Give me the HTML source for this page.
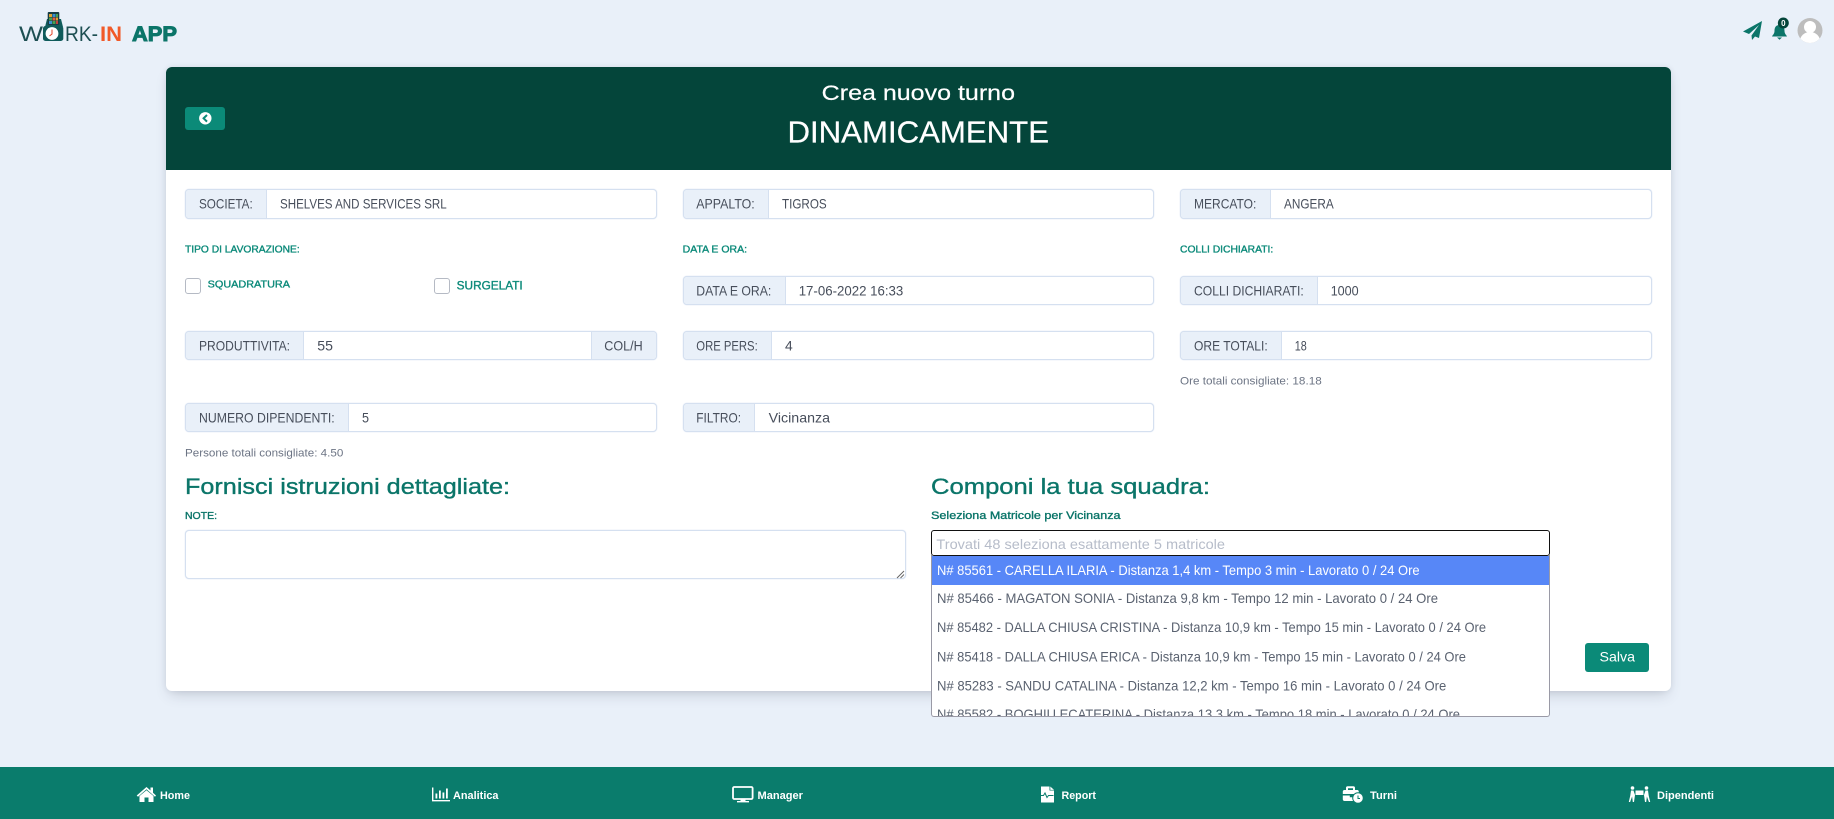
<!DOCTYPE html>
<html lang="it">
<head>
<meta charset="utf-8">
<title>Crea nuovo turno</title>
<style>
html,body{margin:0;padding:0;width:1834px;height:819px;overflow:hidden;background:#e9f0f9;font-family:"Liberation Sans",sans-serif}
.a{position:absolute;box-sizing:border-box}
#card{left:166px;top:67px;width:1505px;height:624px;background:#fff;border-radius:6px;box-shadow:0 7px 14px -4px rgba(65,69,88,.22),0 0 6px rgba(65,69,88,.10)}
#head{left:166px;top:67px;width:1505px;height:103px;background:#04453a;border-radius:6px 6px 0 0}
#back{left:185px;top:107px;width:40px;height:23px;background:#0b8a78;border-radius:3px}
.ig{background:#fff;border:1px solid #d5e0f0;border-radius:4px;overflow:hidden;box-shadow:0 0 1px rgba(160,185,225,.6)}
.ig i{position:absolute;top:0;bottom:0;background:#e9f0f9;display:block;box-sizing:border-box}
.ig i.l{left:0;border-right:1px solid #d5e0f0}
.ig i.r{right:0;border-left:1px solid #d5e0f0}
.cb{width:16px;height:16px;border:1px solid #b5bac4;border-radius:3px;background:#fff}
#ta{left:185px;top:530px;width:721px;height:49px;background:#fff;border:1px solid #d5e0f0;border-radius:4px;box-shadow:0 0 1px rgba(160,185,225,.6)}
#sel{left:931px;top:530px;width:619px;height:26px;background:#fff;border:1.5px solid #111;border-radius:3px}
#list{left:931px;top:555px;width:619px;height:162px;background:#fff;border:1px solid #9a9aa6;border-top:0;border-radius:0 0 3px 3px}
#hi{left:932px;top:556px;width:617px;height:29px;background:#5787f7}
#salva{left:1585px;top:643px;width:64px;height:29px;background:#0b8a78;border-radius:3px}
#foot{left:0;top:767px;width:1834px;height:52px;background:#0a7c6c}
svg#o{position:absolute;left:0;top:0}
text{font-family:"Liberation Sans",sans-serif}
.v{font-size:13.6px;fill:#474e5b}
.t{font-size:10.4px;fill:#0c8a7a;stroke:#0c8a7a;stroke-width:.35px}
.s{font-size:11.2px;fill:#6c7484}
.li{font-size:13.6px;fill:#5a6270}
.f{font-size:11px;font-weight:700;fill:#fff}
.h{font-size:22px;fill:#0b7569;stroke:#0b7569;stroke-width:.35px}
.ic{fill:#fff}
</style>
</head>
<body>
<div class="a" id="card"></div>
<div class="a" id="head"></div>
<div class="a" id="back"></div>

<div class="a ig" style="left:185px;top:189px;width:472px;height:30px"><i class="l" style="width:81px"></i></div>
<div class="a ig" style="left:683px;top:189px;width:471px;height:30px"><i class="l" style="width:85px"></i></div>
<div class="a ig" style="left:1180px;top:189px;width:472px;height:30px"><i class="l" style="width:90px"></i></div>

<div class="a cb" style="left:185px;top:278px"></div>
<div class="a cb" style="left:434px;top:278px"></div>

<div class="a ig" style="left:683px;top:276px;width:471px;height:29px"><i class="l" style="width:102px"></i></div>
<div class="a ig" style="left:1180px;top:276px;width:472px;height:29px"><i class="l" style="width:137px"></i></div>

<div class="a ig" style="left:185px;top:331px;width:472px;height:29px"><i class="l" style="width:118px"></i><i class="r" style="width:65px"></i></div>
<div class="a ig" style="left:683px;top:331px;width:471px;height:29px"><i class="l" style="width:88px"></i></div>
<div class="a ig" style="left:1180px;top:331px;width:472px;height:29px"><i class="l" style="width:101px"></i></div>

<div class="a ig" style="left:185px;top:403px;width:472px;height:29px"><i class="l" style="width:163px"></i></div>
<div class="a ig" style="left:683px;top:403px;width:471px;height:29px"><i class="l" style="width:71px"></i></div>

<div class="a" id="ta"></div>
<div class="a" id="list"></div>
<div class="a" id="hi"></div>
<div class="a" id="sel"></div>
<div class="a" id="salva"></div>
<div class="a" id="foot"></div>

<svg id="o" width="1834" height="819" viewBox="0 0 1834 819" xmlns="http://www.w3.org/2000/svg">
<!-- logo -->
<text x="19" y="41" font-size="21" fill="#1d4f52" textLength="24" lengthAdjust="spacingAndGlyphs">W</text>
<path d="M45 27 L47 19 H61 L63 27Z" fill="#0f5b5b"/>
<rect x="47.7" y="12" width="11.6" height="13" rx="1" fill="#173c44"/>
<rect x="49" y="14" width="3" height="3" fill="#e0a030"/><rect x="52.5" y="14" width="3" height="3" fill="#3a8fd0"/><rect x="56" y="14" width="2" height="3" fill="#45a050"/>
<rect x="49" y="17.5" width="3" height="3" fill="#45a050"/><rect x="52.5" y="17.5" width="3" height="3" fill="#e06040"/><rect x="56" y="17.5" width="2" height="3" fill="#e0a030"/>
<rect x="49" y="21" width="3" height="3" fill="#3a8fd0"/><rect x="52.5" y="21" width="3" height="3" fill="#45a050"/><rect x="56" y="21" width="2" height="3" fill="#c04040"/>
<rect x="43" y="26" width="20.3" height="15" rx="2.5" fill="#0f5b5b"/>
<circle cx="52" cy="33.5" r="6.4" fill="#fff"/>
<path d="M52 29.5V34L49.5 36" fill="none" stroke="#e2462a" stroke-width="1"/>
<text x="65" y="41" font-size="21" fill="#1d4f52" textLength="33" lengthAdjust="spacingAndGlyphs">RK-</text>
<text x="100" y="41" font-size="21" font-weight="700" fill="#f15a29" textLength="22" lengthAdjust="spacingAndGlyphs">IN</text>
<text x="132" y="41" font-size="21" font-weight="700" fill="#0b7569" stroke="#0b7569" stroke-width="1" textLength="45" lengthAdjust="spacingAndGlyphs">APP</text>

<!-- top right -->
<path d="M1762 21 L1743 31.5 L1749 34 L1759 25 L1751.5 35.5 L1752 40 L1755 36.5 L1759 38Z" fill="#0b7569"/>
<path d="M1779.5 25c-4 0-5 3-5 6 0 3-2 4-2.5 5.5h15c-.5-1.5-2.5-2.5-2.5-5.5 0-3-1-6-5-6z" fill="#0b7569"/>
<path d="M1777 37.5h5l-2.5 2.2z" fill="#0b7569"/>
<circle cx="1783.3" cy="23" r="5.5" fill="#04453a"/>
<text x="1783.3" y="26" font-size="8" font-weight="700" fill="#fff" text-anchor="middle">0</text>
<clipPath id="av"><circle cx="1810" cy="30.5" r="12.5"/></clipPath>
<circle cx="1810" cy="30.5" r="12.5" fill="#bdbdbd"/>
<g clip-path="url(#av)" fill="#fff"><circle cx="1810" cy="27" r="6"/><ellipse cx="1810" cy="41" rx="10" ry="9"/></g>

<!-- header -->
<circle cx="205.3" cy="118.3" r="6.2" fill="#fff"/>
<path d="M207 115 L203.6 118.3 L207 121.6" fill="none" stroke="#0b8a78" stroke-width="2"/>
<text x="821.7" y="100" font-size="21.6" fill="#fff" stroke="#fff" stroke-width=".2" textLength="193.3" lengthAdjust="spacingAndGlyphs">Crea nuovo turno</text>
<text x="787.5" y="142.7" font-size="30.4" fill="#fff" stroke="#fff" stroke-width=".25" textLength="261.5" lengthAdjust="spacingAndGlyphs">DINAMICAMENTE</text>

<!-- row 1 -->
<text class="v" x="199" y="208.3" textLength="53.7" lengthAdjust="spacingAndGlyphs">SOCIETA:</text>
<text class="v" x="280" y="208.3" textLength="166.7" lengthAdjust="spacingAndGlyphs">SHELVES AND SERVICES SRL</text>
<text class="v" x="696.3" y="208.3" textLength="58.4" lengthAdjust="spacingAndGlyphs">APPALTO:</text>
<text class="v" x="782" y="208.3" textLength="44.7" lengthAdjust="spacingAndGlyphs">TIGROS</text>
<text class="v" x="1194" y="208.3" textLength="62.3" lengthAdjust="spacingAndGlyphs">MERCATO:</text>
<text class="v" x="1284" y="208.3" textLength="49.7" lengthAdjust="spacingAndGlyphs">ANGERA</text>

<!-- section labels -->
<text class="t" x="185" y="252.6" textLength="114.7" lengthAdjust="spacingAndGlyphs">TIPO DI LAVORAZIONE:</text>
<text class="t" x="682.7" y="252.6" textLength="64.3" lengthAdjust="spacingAndGlyphs">DATA E ORA:</text>
<text class="t" x="1180" y="252.6" textLength="93.3" lengthAdjust="spacingAndGlyphs">COLLI DICHIARATI:</text>

<text class="t" x="207.7" y="287.5" textLength="82.3" lengthAdjust="spacingAndGlyphs">SQUADRATURA</text>
<text class="t" x="456.7" y="289.5" style="font-size:11.5px" textLength="66" lengthAdjust="spacingAndGlyphs">SURGELATI</text>

<!-- row 2 -->
<text class="v" x="696.3" y="295.3" textLength="75" lengthAdjust="spacingAndGlyphs">DATA E ORA:</text>
<text class="v" x="798.7" y="295.3" textLength="104.6" lengthAdjust="spacingAndGlyphs">17-06-2022 16:33</text>
<text class="v" x="1194" y="295.3" textLength="109.7" lengthAdjust="spacingAndGlyphs">COLLI DICHIARATI:</text>
<text class="v" x="1330.7" y="295.3" textLength="28" lengthAdjust="spacingAndGlyphs">1000</text>

<!-- row 3 -->
<text class="v" x="199" y="350.3" textLength="91" lengthAdjust="spacingAndGlyphs">PRODUTTIVITA:</text>
<text class="v" x="317.3" y="350.3" textLength="15.7" lengthAdjust="spacingAndGlyphs">55</text>
<text class="v" x="604.3" y="350.3" textLength="38.4" lengthAdjust="spacingAndGlyphs">COL/H</text>
<text class="v" x="696.3" y="350.3" textLength="61.4" lengthAdjust="spacingAndGlyphs">ORE PERS:</text>
<text class="v" x="785" y="350.3" textLength="7.7" lengthAdjust="spacingAndGlyphs">4</text>
<text class="v" x="1194" y="350.3" textLength="73.7" lengthAdjust="spacingAndGlyphs">ORE TOTALI:</text>
<text class="v" x="1294.7" y="350.3" textLength="12" lengthAdjust="spacingAndGlyphs">18</text>
<text class="s" x="1180" y="384.6" textLength="141.7" lengthAdjust="spacingAndGlyphs">Ore totali consigliate: 18.18</text>

<!-- row 4 -->
<text class="v" x="199" y="422.3" textLength="135.7" lengthAdjust="spacingAndGlyphs">NUMERO DIPENDENTI:</text>
<text class="v" x="362" y="422.3" textLength="7" lengthAdjust="spacingAndGlyphs">5</text>
<text class="v" x="696.3" y="422.3" textLength="44.7" lengthAdjust="spacingAndGlyphs">FILTRO:</text>
<text class="v" x="768.7" y="422.3" textLength="61.3" lengthAdjust="spacingAndGlyphs">Vicinanza</text>
<text class="s" x="185" y="456.6" textLength="158.3" lengthAdjust="spacingAndGlyphs">Persone totali consigliate: 4.50</text>

<!-- lower -->
<text class="h" x="185" y="494" textLength="325" lengthAdjust="spacingAndGlyphs">Fornisci istruzioni dettagliate:</text>
<text class="h" x="931" y="494" textLength="279" lengthAdjust="spacingAndGlyphs">Componi la tua squadra:</text>
<text class="t" style="fill:#0b7569;stroke:#0b7569" x="185" y="519" textLength="32" lengthAdjust="spacingAndGlyphs">NOTE:</text>
<text class="t" style="fill:#0b7569;stroke:#0b7569;font-size:11px" x="931" y="519" textLength="189.5" lengthAdjust="spacingAndGlyphs">Seleziona Matricole per Vicinanza</text>
<path d="M904 571 L897 578 M904 574.5 L900.5 578" stroke="#666" stroke-width="1" fill="none"/>

<text x="936.4" y="549.2" font-size="13.6" fill="#b6bcc9" textLength="288.6" lengthAdjust="spacingAndGlyphs">Trovati 48 seleziona esattamente 5 matricole</text>
<text class="li" style="fill:#fff" x="937" y="574.9" textLength="482.6" lengthAdjust="spacingAndGlyphs">N# 85561 - CARELLA ILARIA - Distanza 1,4 km - Tempo 3 min - Lavorato 0 / 24 Ore</text>
<text class="li" x="937" y="603" textLength="501" lengthAdjust="spacingAndGlyphs">N# 85466 - MAGATON SONIA - Distanza 9,8 km - Tempo 12 min - Lavorato 0 / 24 Ore</text>
<text class="li" x="937" y="632" textLength="549" lengthAdjust="spacingAndGlyphs">N# 85482 - DALLA CHIUSA CRISTINA - Distanza 10,9 km - Tempo 15 min - Lavorato 0 / 24 Ore</text>
<text class="li" x="937" y="661.5" textLength="529" lengthAdjust="spacingAndGlyphs">N# 85418 - DALLA CHIUSA ERICA - Distanza 10,9 km - Tempo 15 min - Lavorato 0 / 24 Ore</text>
<text class="li" x="937" y="690.4" textLength="509.3" lengthAdjust="spacingAndGlyphs">N# 85283 - SANDU CATALINA - Distanza 12,2 km - Tempo 16 min - Lavorato 0 / 24 Ore</text>
<svg x="932" y="700" width="617" height="16"><text class="li" x="5" y="19" textLength="523" lengthAdjust="spacingAndGlyphs">N# 85582 - BOGHIU ECATERINA - Distanza 13,3 km - Tempo 18 min - Lavorato 0 / 24 Ore</text></svg>

<text x="1599.5" y="661.7" font-size="13.6" fill="#fff" textLength="35.5" lengthAdjust="spacingAndGlyphs">Salva</text>

<!-- footer -->
<g class="ic">
<path d="M136.7 795.5 L146.5 787 L150.5 790.5 V787.5 H153 V792.7 L156 795.5 L155 796.7 L146.5 789.3 L138 796.7Z"/>
<path d="M139.5 796 L146.5 790.3 L153.5 796 V802 H148.5 V797.5 H144.5 V802 H139.5Z"/>
</g>
<text class="f" x="160" y="799" textLength="30" lengthAdjust="spacingAndGlyphs">Home</text>
<g class="ic">
<path d="M432 787.5h1.4V800h16.6v1.4H432z"/>
<rect x="435.5" y="793.5" width="1.8" height="5"/><rect x="439" y="790.5" width="1.8" height="8"/><rect x="442.5" y="792.5" width="1.8" height="6"/><rect x="446" y="788.5" width="1.8" height="10"/>
</g>
<text class="f" x="453" y="799" textLength="45.5" lengthAdjust="spacingAndGlyphs">Analitica</text>
<rect x="733" y="787" width="19.6" height="12" rx="1.2" fill="none" stroke="#fff" stroke-width="1.8"/>
<rect x="740.5" y="799" width="5" height="2" class="ic"/><rect x="737" y="801" width="12" height="1.4" class="ic"/>
<text class="f" x="757.5" y="799" textLength="45.5" lengthAdjust="spacingAndGlyphs">Manager</text>
<path class="ic" d="M1041 786.5h8.5v4h4.5V802.5h-13z"/>
<path class="ic" d="M1050.3 786.5l3.7 3.4h-3.7z"/>
<path d="M1040 795.5h3.5l1.5-2.5 2 4.5 1.5-2h5" fill="none" stroke="#0a7c6c" stroke-width="1"/>
<text class="f" x="1061.5" y="799" textLength="34.5" lengthAdjust="spacingAndGlyphs">Report</text>
<path class="ic" d="M1346 790v-2.2c0-1 .8-1.6 1.6-1.6h5.8c.8 0 1.6.6 1.6 1.6v2.2h2.2c1 0 1.6.7 1.6 1.6v2.4h-16v-2.4c0-.9.6-1.6 1.6-1.6zM1348 790h5v-1.8h-5z"/>
<path class="ic" d="M1342.800 795.500h7v1.800h3.200v-1.200l1.500-.6v5.500h-10c-.9 0-1.700-.7-1.700-1.600z"/>
<circle class="ic" cx="1358" cy="798" r="5.300" stroke="#0a7c6c" stroke-width="1"/>
<path d="M1358 795.500V798.500h2" fill="none" stroke="#0a7c6c" stroke-width="1"/>
<text class="f" x="1370" y="799" textLength="27" lengthAdjust="spacingAndGlyphs">Turni</text>
<g class="ic">
<circle cx="1632.500" cy="788" r="1.800"/><circle cx="1646.500" cy="788" r="1.800"/>
<rect x="1635.500" y="790.500" width="8" height="4.500"/>
<path d="M1631 790.500h2.500l1.500 4.500-1 7h-1.200l-.7-5.500-2 5.500h-1.300l1.500-6.500z"/>
<path d="M1648 790.500h-2.500l-1.500 4.500 1 7h1.200l.7-5.500 2 5.500h1.300l-1.500-6.500z"/>
</g>
<text class="f" x="1657" y="799" textLength="57" lengthAdjust="spacingAndGlyphs">Dipendenti</text>
</svg>
</body>
</html>
